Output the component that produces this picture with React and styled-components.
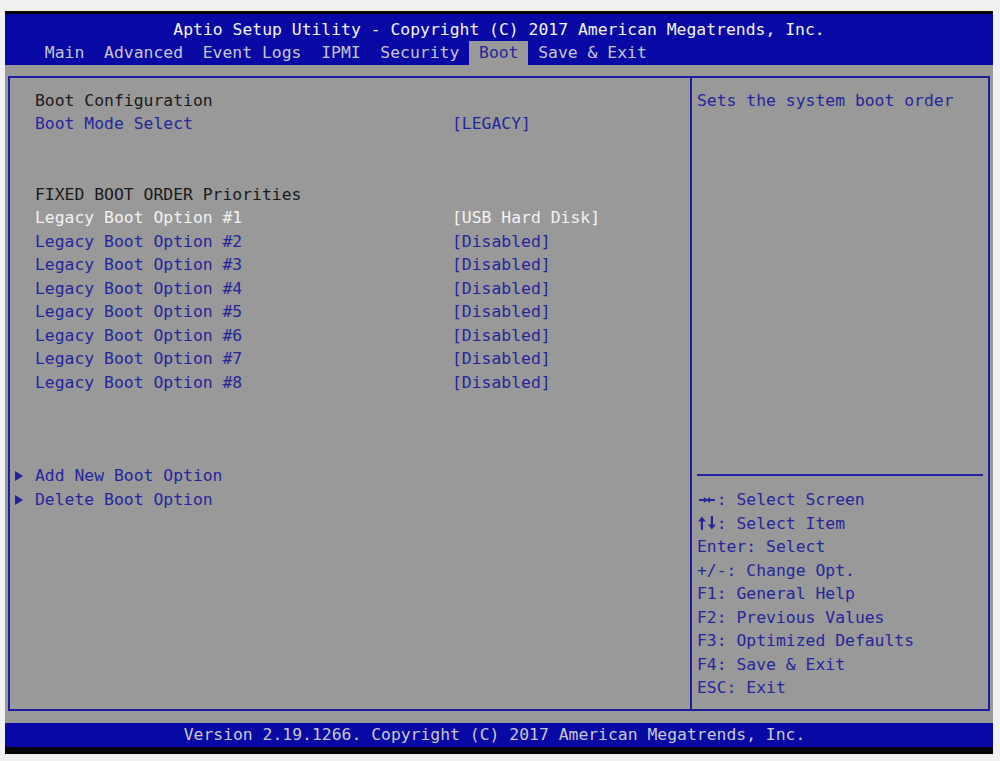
import React from "react";
import styled, { createGlobalStyle } from "styled-components";

const ROW = 23.47;
const CH = 9.87;

const GlobalStyle = createGlobalStyle`
  html, body {
    margin: 0;
    padding: 0;
    background: #f1f1f1;
  }
  body {
    font-family: "DejaVu Sans Mono", "Liberation Mono", monospace;
    font-size: 16.4px;
  }
`;

const Screen = styled.div`
  margin: 11px 0 0 5px;
  width: 988px;
  height: 743px;
  display: flex;
  flex-direction: column;
  background: #999999;
  white-space: pre;
`;

const Header = styled.header`
  background: #0808a4;
  border-top: 3px solid #050505;
  padding-top: 4px;
`;

const Title = styled.div`
  text-align: center;
  color: #f4f4f4;
  line-height: ${ROW}px;
  height: ${ROW}px;
`;

const TabBar = styled.nav`
  display: flex;
  padding-left: 30px;
  height: ${ROW}px;
`;

const Tab = styled.span`
  padding: 0 1ch;
  line-height: ${ROW}px;
  color: ${(p) => (p.$active ? "#26269c" : "#c6c6d2")};
  background: ${(p) => (p.$active ? "#999999" : "transparent")};
`;

const Body = styled.main`
  flex: 1;
  padding: 11px 3px 12px 3px;
  display: flex;
`;

const Frame = styled.div`
  flex: 1;
  border: 2px solid #1c1c9e;
  display: grid;
  grid-template-columns: 680px 1fr;
`;

const LeftPanel = styled.section`
  padding: 11px 0 0 5px;
`;

const Row = styled.div`
  display: grid;
  grid-template-columns: 20px 417px 1fr;
  align-items: center;
  height: ${ROW}px;
  line-height: ${ROW}px;
  color: ${(p) =>
    p.$tone === "white" ? "#f2f2f2" : p.$tone === "black" ? "#1a1a1a" : "#26269c"};
`;

const Spacer = styled.div`
  height: ${(p) => p.$lines * ROW}px;
`;

const Arrow = styled.span`
  width: 0;
  height: 0;
  border-top: 5px solid transparent;
  border-bottom: 5px solid transparent;
  border-left: 8px solid #22229e;
`;

const RightPanel = styled.aside`
  border-left: 2px solid #1c1c9e;
  display: flex;
  flex-direction: column;
  padding-bottom: 9.5px;
  margin-right: -2px;
`;

const Description = styled.div`
  flex: 1;
  padding: 11px 0 0 5px;
  color: #26269c;
  line-height: ${ROW}px;
`;

const Divider = styled.hr`
  margin: 0 7px 12.3px 5px;
  border: none;
  height: 2px;
  background: #2424a4;
`;

const HelpList = styled.ul`
  list-style: none;
  margin: 0;
  padding: 0 0 0 5px;
  color: #26269c;
`;

const HelpItem = styled.li`
  display: flex;
  align-items: center;
  height: ${ROW}px;
  line-height: ${ROW}px;
`;

const KeyIcon = styled.svg`
  width: ${CH}px;
  height: 14px;
  flex: none;
  fill: #26269c;
  stroke: #26269c;
  transform: rotate(${(p) => p.$angle}deg);
`;

const Footer = styled.footer`
  height: 24px;
  line-height: 24px;
  text-align: center;
  padding-right: 9px;
  background: #0808a4;
  color: #c8c8cc;
  border-bottom: 7px solid #050505;
`;

// arrow drawn pointing up, rotated for the other directions
function KeyArrow({ dir }) {
  const angle = { up: 0, right: 90, down: 180, left: 270 }[dir];
  const horizontal = dir === "left" || dir === "right";
  return (
    <KeyIcon viewBox="0 0 10 14" $angle={angle}>
      {horizontal ? (
        <>
          <polygon points="2,5 5,1 8,5" stroke="none" />
          <line x1="5" y1="4" x2="5" y2="10" strokeWidth="2" />
        </>
      ) : (
        <>
          <polygon points="1,5.5 5,0.5 9,5.5" stroke="none" />
          <line x1="5" y1="5" x2="5" y2="14" strokeWidth="2.2" />
        </>
      )}
    </KeyIcon>
  );
}

const tabs = ["Main", "Advanced", "Event Logs", "IPMI", "Security", "Boot", "Save & Exit"];

const bootOptions = [1, 2, 3, 4, 5, 6, 7, 8].map((n) => ({
  label: `Legacy Boot Option #${n}`,
  value: n === 1 ? "[USB Hard Disk]" : "[Disabled]",
  tone: n === 1 ? "white" : "blue",
}));

const help = [
  { keys: ["right", "left"], text: ": Select Screen" },
  { keys: ["up", "down"], text: ": Select Item" },
  { text: "Enter: Select" },
  { text: "+/-: Change Opt." },
  { text: "F1: General Help" },
  { text: "F2: Previous Values" },
  { text: "F3: Optimized Defaults" },
  { text: "F4: Save & Exit" },
  { text: "ESC: Exit" },
];

export default function App() {
  return (
    <>
      <GlobalStyle />
      <Screen>
        <Header>
          <Title>Aptio Setup Utility - Copyright (C) 2017 American Megatrends, Inc.</Title>
          <TabBar>
            {tabs.map((t) => (
              <Tab key={t} $active={t === "Boot"}>
                {t}
              </Tab>
            ))}
          </TabBar>
        </Header>
        <Body>
          <Frame>
            <LeftPanel>
              <Row $tone="black">
                <span />
                <span>Boot Configuration</span>
              </Row>
              <Row $tone="blue">
                <span />
                <span>Boot Mode Select</span>
                <span>[LEGACY]</span>
              </Row>
              <Spacer $lines={2} />
              <Row $tone="black">
                <span />
                <span>FIXED BOOT ORDER Priorities</span>
              </Row>
              {bootOptions.map((o) => (
                <Row key={o.label} $tone={o.tone}>
                  <span />
                  <span>{o.label}</span>
                  <span>{o.value}</span>
                </Row>
              ))}
              <Spacer $lines={3} />
              <Row $tone="blue">
                <Arrow />
                <span>Add New Boot Option</span>
              </Row>
              <Row $tone="blue">
                <Arrow />
                <span>Delete Boot Option</span>
              </Row>
            </LeftPanel>
            <RightPanel>
              <Description>Sets the system boot order</Description>
              <Divider />
              <HelpList>
                {help.map((h) => (
                  <HelpItem key={h.text}>
                    {h.keys && h.keys.map((k) => <KeyArrow key={k} dir={k} />)}
                    <span>{h.text}</span>
                  </HelpItem>
                ))}
              </HelpList>
            </RightPanel>
          </Frame>
        </Body>
        <Footer>Version 2.19.1266. Copyright (C) 2017 American Megatrends, Inc.</Footer>
      </Screen>
    </>
  );
}
